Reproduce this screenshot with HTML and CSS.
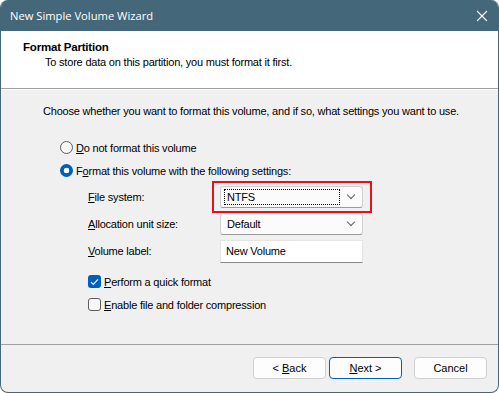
FILE: index.html
```html
<!DOCTYPE html>
<html lang="en">
<head>
  <meta charset="UTF-8">
  <title>New Simple Volume Wizard</title>
  <link rel="stylesheet" href="styles.css">
</head>
<body>
  <div class="window">
    <div class="titlebar">
      <span class="title">New Simple Volume Wizard</span>
      <svg class="close" width="12" height="12" viewBox="0 0 12 12"><path d="M1 1L11 11M11 1L1 11" stroke="#fff" stroke-width="1.1"/></svg>
    </div>
    <div class="header">
      <h1>Format Partition</h1>
      <p>To store data on this partition, you must format it first.</p>
    </div>
    <div class="content">
      <p class="intro">Choose whether you want to format this volume, and if so, what settings you want to use.</p>
      <div class="option">
        <span class="radio"></span>
        <span><u>D</u>o not format this volume</span>
      </div>
      <div class="option">
        <span class="radio checked"></span>
        <span>F<u>o</u>rmat this volume with the following settings:</span>
      </div>
      <div class="settings">
        <label><u>F</u>ile system:</label>
        <div class="combo marked"><span class="focus">NTFS</span><span class="chev"></span></div>
        <label><u>A</u>llocation unit size:</label>
        <div class="combo"><span class="value">Default</span><span class="chev"></span></div>
        <label><u>V</u>olume label:</label>
        <div class="textbox">New Volume</div>
      </div>
      <div class="checks">
        <div class="option">
          <span class="check checked"><svg width="9" height="8" viewBox="0 0 9 8"><path d="M1 4.2L3.3 6.4L8 1.4" stroke="#fff" stroke-width="1.1" fill="none"/></svg></span>
          <span><u>P</u>erform a quick format</span>
        </div>
        <div class="option">
          <span class="check"></span>
          <span><u>E</u>nable file and folder compression</span>
        </div>
      </div>
    </div>
    <div class="footer">
      <button class="btn">&lt; <u>B</u>ack</button>
      <button class="btn default"><u>N</u>ext &gt;</button>
      <button class="btn cancel">Cancel</button>
    </div>
  </div>
</body>
</html>
```
FILE: styles.css
```css
body { margin: 0; background: #fff; font-family: "Liberation Sans", Arial, sans-serif; font-size: 11px; letter-spacing: -0.2px; color: #000; }
.window { width: 499px; height: 393px; box-sizing: border-box; border: 1px solid #44677a; border-top: none; border-radius: 8px; overflow: hidden; display: flex; flex-direction: column; background: #f0f0f0; }
.titlebar { height: 31px; flex: none; background: #44677a; color: #fff; display: flex; align-items: center; justify-content: space-between; padding: 0 10px 0 9px; font-family: "Open Sans", "Noto Sans", sans-serif; font-size: 11.2px; letter-spacing: 0; }
.header { height: 58px; flex: none; background: #fff; border-bottom: 1px solid #a0a0a0; box-sizing: border-box; padding: 9px 0 0 22px; }
.header h1 { margin: 0; font-size: 11.5px; font-weight: bold; line-height: 15px; }
.header p { margin: 0; padding-left: 22px; line-height: 15px; }
.content { flex: 1; border-top: 1px solid #fff; padding: 14px 0 0 42px; }
.intro { margin: 0 0 21px; line-height: 15px; }
.option { display: flex; align-items: center; gap: 3px; height: 15px; margin-bottom: 8px; }
.content > .option { margin-left: 17px; }
.radio { width: 13px; height: 13px; box-sizing: border-box; border: 1px solid #5d5d5d; border-radius: 50%; background: #f7f7f7; }
.radio.checked { border: none; background: radial-gradient(circle, #fff 0 2.6px, #005fb8 3.1px); }
.settings { display: grid; grid-template-columns: 132px 143px; row-gap: 5px; margin: 0 0 0 45px; align-items: center; }
.settings label { line-height: 15px; }
.combo { position: relative; height: 22px; box-sizing: border-box; border: 1px solid #d0d0d0; border-bottom-color: #9a9a9a; border-radius: 3px; background: #fbfbfb; display: flex; align-items: center; padding: 0 6px 0 3px; justify-content: space-between; }
.combo.marked::after { content: ""; position: absolute; left: -9px; top: -6px; right: -10px; bottom: -6px; border: 2px solid #e8101a; }
.focus { flex: 1; border: 1px dotted #000; padding: 0 2px; line-height: 14px; margin-right: 8px; }
.value { padding-left: 3px; }
.chev { width: 5px; height: 5px; border-right: 1px solid #606060; border-bottom: 1px solid #606060; transform: rotate(45deg); margin: -4px 2px 0 0; }
.textbox { height: 23px; box-sizing: border-box; border: 1px solid #e4e4e4; border-bottom-color: #8a8a8a; background: #fff; padding: 4px 0 0 5px; }
.checks { margin: 11px 0 0 45px; }
.check { width: 13px; height: 13px; box-sizing: border-box; border: 1px solid #5d5d5d; border-radius: 3px; background: #f7f7f7; display: flex; align-items: center; justify-content: center; }
.check.checked { border: none; background: #005fb8; }
.footer { height: 48px; flex: none; border-top: 1px solid #a0a0a0; box-sizing: border-box; display: flex; align-items: center; justify-content: flex-end; padding: 0 11px 2px 0; gap: 3px; }
.btn { width: 73px; height: 22px; font: inherit; font-size: 11px; border: 1px solid #d0d0d0; border-radius: 4px; background: #fdfdfd; padding: 0; color: #000; }
.btn.default { border-color: #005fb8; }
.btn.cancel { margin-left: 9px; }
```
